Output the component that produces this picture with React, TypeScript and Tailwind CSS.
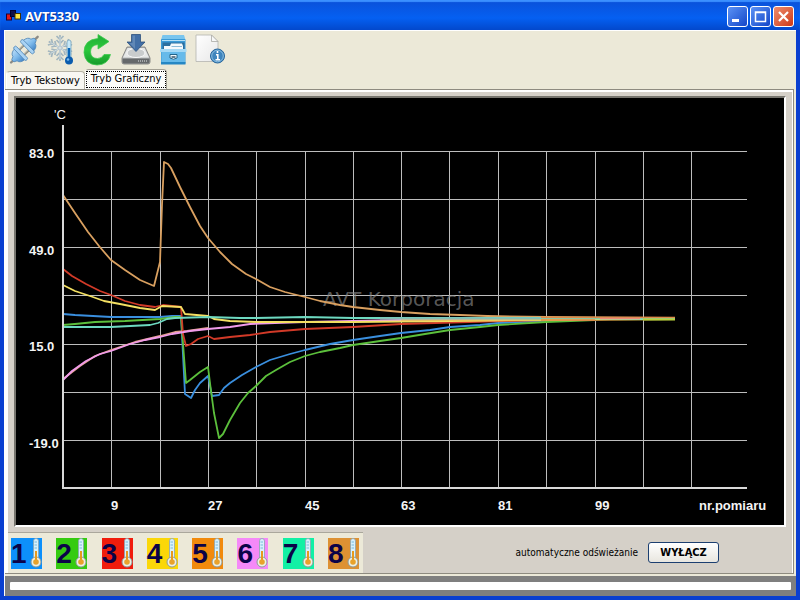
import React from "react";

const UI_FONT = "font-['DejaVu_Sans_Condensed','DejaVu_Sans',sans-serif]";

function PlugIcon() {
  return (
    <svg viewBox="0 0 32 32" className="size-8" aria-hidden="true">
      <defs>
        <linearGradient id="plug" x1="0" y1="0" x2="0" y2="1">
          <stop offset="0" stopColor="#b9dcf7" />
          <stop offset="0.5" stopColor="#7fbbec" />
          <stop offset="1" stopColor="#3f83c6" />
        </linearGradient>
      </defs>
      <g transform="rotate(-44 15 16)">
        <path d="M-3 16 H3 M29 16 H34" stroke="#8b8b86" strokeWidth="2.400" strokeLinecap="round" />
        <path d="M11 12.500 H18.500 M11 19.500 H18.500" stroke="#8a8a80" strokeWidth="2.200" />
        <path d="M11 12 H18.500 M11 19 H18.500" stroke="#d5d3c4" strokeWidth="0.800" />
        <path d="M20.500 8.500 Q27 9 27.500 13 L30.500 14.500 V17.500 L27.500 19 Q27 23 20.500 23.500 Z" fill="url(#plug)" stroke="#4f86b8" strokeWidth="0.800" />
        <rect x="18" y="7" width="3.500" height="18" rx="1.500" fill="#a9d3f4" stroke="#4f86b8" strokeWidth="0.800" />
        <path d="M9.500 8.500 Q3 9 2.500 13 L-0.500 14.500 V17.500 L2.500 19 Q3 23 9.500 23.500 Z" fill="url(#plug)" stroke="#4f86b8" strokeWidth="0.800" />
        <rect x="8.500" y="7" width="3.500" height="18" rx="1.500" fill="#a9d3f4" stroke="#4f86b8" strokeWidth="0.800" />
      </g>
    </svg>
  );
}

function FreezeIcon() {
  return (
    <svg viewBox="0 0 32 32" className="size-8" aria-hidden="true">
      <g stroke="#a3b6bf" strokeWidth="1.700" fill="none">
        {[0, 60, 120, 180, 240, 300].map((a) => (
          <g key={a} transform={`rotate(${a} 14 14)`}>
            <path d="M14 14 V1 M10.500 2 L14 5.500 L17.500 2 M10.500 6 L14 9.500 L17.500 6" />
          </g>
        ))}
      </g>
      <path d="M14 3 V25 M4.500 8.500 L23.500 19.500 M23.500 8.500 L4.500 19.500" stroke="#e3edf1" strokeWidth="0.700" />
      <rect x="21" y="6" width="4" height="19" rx="2" fill="#c6e8f8" stroke="#7aa5bd" strokeWidth="0.800" />
      <path d="M23 14 V25" stroke="#0b67b8" strokeWidth="2.500" />
      <circle cx="23" cy="26.500" r="4" fill="#0b5cae" />
      <circle cx="22" cy="25.500" r="1.300" fill="#77b9ee" />
    </svg>
  );
}

function RefreshIcon() {
  return (
    <svg viewBox="2 0 32 32" className="size-8" aria-hidden="true">
      <defs>
        <linearGradient id="refresh" x1="0" y1="0" x2="0" y2="1">
          <stop offset="0" stopColor="#1fae36" />
          <stop offset="0.5" stopColor="#2cc93c" />
          <stop offset="1" stopColor="#159a2b" />
        </linearGradient>
      </defs>
      <path
        d="M17 0.500 L28 7.500 L17 15 V10.500 Q9.500 11 9.500 18 Q10 24.500 16.500 24.500 Q21 24.500 23 20.500 L29.500 20.500 Q27 31 16 31 Q4 30.500 3 18.500 Q3 5.500 17 4.500 Z"
        fill="url(#refresh)"
        stroke="#3cc94c"
        strokeWidth="0.800"
      />
    </svg>
  );
}

function SaveDiskIcon() {
  return (
    <svg viewBox="0 0 32 32" className="size-8" aria-hidden="true">
      <path d="M7 13 H25 L30 24 V28 Q30 30 28 30 H4 Q2 30 2 28 V24 Z" fill="#b9bcbd" stroke="#777" strokeWidth="0.800" />
      <path d="M7.500 14 H24.500 L29 23.500 H3 Z" fill="#e6e8e8" />
      <ellipse cx="16" cy="19" rx="9" ry="4.500" fill="#c9cccd" stroke="#f7f7f7" />
      <path d="M2.500 24.500 H29.500 V27.500 Q29.500 29.500 28 29.500 H4 Q2.500 29.500 2.500 27.500 Z" fill="#66696b" />
      <path d="M18 27 H28" stroke="#a5a8aa" strokeDasharray="1 1" strokeWidth="2" />
      <path d="M11.500 0.500 H20.500 V8 H25 L16 17.500 L7 8 H11.500 Z" fill="#426fa6" stroke="#2d527c" strokeWidth="0.800" />
      <path d="M12.500 1.500 H15 V15 L9.500 9 H12.500 Z" fill="#6d93bd" opacity="0.700" />
    </svg>
  );
}

function CabinetIcon() {
  return (
    <svg viewBox="0 0 32 32" className="size-8" aria-hidden="true">
      <path d="M5.500 1 H27 L28.500 6 H4 Z" fill="#79c5ee" />
      <rect x="4" y="5" width="24.500" height="25" rx="1" fill="#3a9ad6" />
      <path d="M5 6.500 H28" stroke="#b5e1f7" />
      <rect x="5.500" y="8.500" width="22" height="7.500" fill="#2b6f9f" />
      <path d="M7 12 H13 L14 9.500 H25 L26 12 V16 H7 Z" fill="#f4f9fc" />
      <path d="M14.500 12.500 H25" stroke="#8cbbd8" />
      <path d="M3 15 H29.500 V18 H3 Z" fill="#a5d9f5" />
      <rect x="4.500" y="18" width="23.500" height="10" fill="#66baea" />
      <rect x="4" y="28" width="24.500" height="2.500" fill="#2687c4" />
      <path d="M13 20.500 H20 V24 Q16.500 26.500 13 24 Z" fill="#f2fbff" stroke="#236489" />
      <path d="M14.500 23 H18.500" stroke="#35546a" strokeWidth="1.500" />
    </svg>
  );
}

function InfoPageIcon() {
  return (
    <svg viewBox="0 0 32 32" className="size-8" aria-hidden="true">
      <defs>
        <linearGradient id="page" x1="0" y1="0" x2="1" y2="1">
          <stop offset="0" stopColor="#ffffff" />
          <stop offset="1" stopColor="#e8e8e8" />
        </linearGradient>
      </defs>
      <path d="M2 1 H17.500 L24 7.500 V27.500 H2 Z" fill="url(#page)" stroke="#b4b4b0" strokeWidth="0.800" />
      <path d="M17.500 1 V7.500 H24 Z" fill="#f8f8f8" stroke="#a9a9a5" strokeWidth="0.800" />
      <circle cx="23.500" cy="22" r="7" fill="#3f85bd" stroke="#27659b" strokeWidth="1" />
      <circle cx="23.500" cy="22" r="5.800" fill="none" stroke="#9dcbea" strokeWidth="0.800" />
      <path d="M23.500 17 V19 M22 20.800 H23.800 V25.500 M21.500 25.800 H26" stroke="#fff" strokeWidth="1.600" fill="none" />
    </svg>
  );
}

const tools = [
  { label: "Połącz", icon: <PlugIcon /> },
  { label: "Temperatura", icon: <FreezeIcon /> },
  { label: "Odśwież", icon: <RefreshIcon /> },
  { label: "Zapisz", icon: <SaveDiskIcon /> },
  { label: "Archiwum", icon: <CabinetIcon /> },
  { label: "Informacje", icon: <InfoPageIcon /> },
];

const columns = [111, 160, 208, 256, 305, 353, 401, 449, 498, 546, 595, 643, 691];
const rows = [151, 199, 247, 295, 344, 392, 440];

const yLabels = [
  { text: "83.0", y: 158 },
  { text: "49.0", y: 255 },
  { text: "15.0", y: 351 },
  { text: "-19.0", y: 448 },
];

const xLabels = [
  { text: "9", x: 111 },
  { text: "27", x: 208 },
  { text: "45", x: 305 },
  { text: "63", x: 401 },
  { text: "81", x: 498 },
  { text: "99", x: 595 },
  { text: "nr.pomiaru", x: 699 },
];

const series = [
  {
    color: "#3a8fdf",
    points:
      "63,314 75,315 111,317 140,317 160,317 172,316 181,316 185,394 191,398 195,390 200,383 208,376 212,396 219,395 224,388 230,383 242,375 256,367 270,360 290,354 305,350 330,344 353,340 380,336 401,333 430,330 450,327 480,325 498,323 546,321 595,319 675,318",
  },
  {
    color: "#5cc03c",
    points:
      "63,325 75,324 95,322 125,321 160,319 175,317 181,317 186,383 190,380 200,372 208,367 211,391 214,413 219,438 223,434 230,420 240,403 248,393 256,386 266,376 276,370 290,362 305,356 320,352 340,348 353,345 380,341 401,338 425,334 450,330 480,327 498,325 546,322 595,320 675,319",
  },
  {
    color: "#e2a08c",
    points: "63,379 80,366 95,356 111,350 135,342 160,336 175,332 187,331 208,328",
  },
  {
    color: "#d23a28",
    points:
      "63,269 72,276 86,284 100,291 111,295 125,301 140,305 155,307 163,305 181,307 183,334 186,346 191,344 198,339 208,336 214,339 230,337 250,335 270,332 305,329 353,327 401,324 470,322 546,320 675,319",
  },
  {
    color: "#d9a060",
    points:
      "63,195 75,213 88,232 99,246 111,260 125,270 140,280 154,286 157,274 160,262 162,205 164,162 168,164 171,168 180,187 190,207 200,226 208,238 220,252 232,264 246,274 256,279 270,287 285,292 305,297 320,301 340,305 353,307 380,310 401,312 430,314 460,315 487,316 546,317 675,318",
  },
  {
    color: "#f09bea",
    points:
      "63,380 72,371 86,361 100,354 111,351 130,344 145,340 160,337 172,334 190,331 208,329 230,327 250,324 275,323 305,322 353,321 401,320 546,319 675,319",
  },
  {
    color: "#f3df62",
    points:
      "63,285 75,291 90,296 104,301 120,304 140,308 155,310 162,306 181,307 185,314 208,316 214,319 230,321 256,322 305,322 353,322 450,321 546,320 610,319 675,319",
  },
  {
    color: "#6dd9c0",
    points: "63,327 111,327 150,325 158,323 167,319 175,318 208,317 240,318 256,318 305,317 353,318 450,318 546,318 675,319",
  },
];

function TemperatureChart() {
  return (
    <svg
      viewBox="16 98 768 427"
      className="block h-auto w-full bg-black"
      role="img"
      aria-label="Wykres temperatury"
      fontFamily="'Liberation Sans', Arial, sans-serif"
    >
      <g stroke="#bdbdbd" strokeWidth="1" shapeRendering="crispEdges">
        {columns.map((x) => (
          <line key={x} x1={x + 0.5} x2={x + 0.5} y1="151" y2="488" />
        ))}
        {rows.map((y) => (
          <line key={y} x1="63" x2="747" y1={y + 0.5} y2={y + 0.5} />
        ))}
      </g>
      <text x="323" y="306" fontSize="20" fill="#8a8a8a" fillOpacity="0.650" fontFamily="'DejaVu Sans', sans-serif">
        AVT Korporacja
      </text>
      <g fill="none" strokeWidth="1.800" strokeLinejoin="round">
        {series.map((s) => (
          <polyline key={s.color} points={s.points} stroke={s.color} />
        ))}
      </g>
      <path d="M401 320 H546" stroke="#e9c25c" strokeWidth="1.500" />
      <path d="M380 318.500 H541" stroke="#86bdb6" strokeWidth="2" />
      <path d="M541 317.500 H675 M541 320 H595" stroke="#df8a4a" strokeWidth="1.500" />
      <path d="M600 318.500 H640" stroke="#ec8a78" strokeWidth="1.500" />
      <path d="M643 319.500 H675" stroke="#b9d13c" strokeWidth="2" />
      <path d="M63 125 V488 H747" fill="none" stroke="#d8d8d8" strokeWidth="2" />
      <g fill="#f4f4f4" fontSize="13" fontWeight="bold">
        <text x="54" y="119" fontWeight="normal">
          'C
        </text>
        {yLabels.map((l) => (
          <text key={l.text} x="29" y={l.y}>
            {l.text}
          </text>
        ))}
        {xLabels.map((l) => (
          <text key={l.text} x={l.x} y="510">
            {l.text}
          </text>
        ))}
      </g>
    </svg>
  );
}

function Thermometer() {
  return (
    <svg viewBox="0 0 12 30" className="h-[30px] w-3" aria-hidden="true">
      <rect x="3.500" y="0.500" width="5" height="23" rx="2.500" fill="#d8f0fc" stroke="#8ba4b0" strokeWidth="0.800" />
      <path d="M4.500 4 H7 M4.500 7 H7 M4.500 10 H7" stroke="#5faed6" strokeWidth="0.800" />
      <circle cx="6" cy="24" r="5" fill="#eef1e4" stroke="#8f9a96" strokeWidth="1" />
      <path d="M6 13 V24" stroke="#e89a1c" strokeWidth="2" />
      <circle cx="6" cy="24" r="2.800" fill="#e9a22b" />
    </svg>
  );
}

const sensors = [
  { id: 1, bg: "bg-[#0d90fb]" },
  { id: 2, bg: "bg-[#35cb10]" },
  { id: 3, bg: "bg-[#f01c0c]" },
  { id: 4, bg: "bg-[#fbd708]" },
  { id: 5, bg: "bg-[#f18a0c]" },
  { id: 6, bg: "bg-[#f589f8]" },
  { id: 7, bg: "bg-[#12f0a5]" },
  { id: 8, bg: "bg-[#dd9133]" },
];

const captionButton =
  "flex size-[21px] items-center justify-center rounded-[3px] border border-white bg-linear-to-br";

function TitleBar() {
  return (
    <header className="flex h-[30px] items-center gap-1 bg-linear-to-b from-[#0a50d8] via-[#0560f2] via-60% to-[#0348cc] pt-[2px] pr-[6px] pl-[6px] shadow-[inset_0_2px_1px_#3b90ff]">
      <svg viewBox="0 0 15 12" className="h-3 w-[15px]" aria-hidden="true">
        <rect x="0.500" y="4" width="5" height="6" fill="#e01818" stroke="#200030" />
        <rect x="4.500" y="0.500" width="5" height="6" fill="#101048" stroke="#000030" />
        <rect x="9" y="3.500" width="5.500" height="5.500" fill="#ffe640" stroke="#403000" />
      </svg>
      <h1 className="flex-1 font-['Noto_Sans',sans-serif] text-[13px] leading-5 font-bold text-white [text-shadow:1px_1px_#0a2a80]">
        AVT5330
      </h1>
      <div className="flex gap-[2px]">
        <button aria-label="Minimalizuj" className={`${captionButton} from-[#5c92f5] to-[#1545c8]`}>
          <svg viewBox="0 0 19 19" className="size-[19px]">
            <rect x="4" y="12" width="7" height="3" fill="#fff" />
          </svg>
        </button>
        <button aria-label="Maksymalizuj" className={`${captionButton} from-[#5c92f5] to-[#1545c8]`}>
          <svg viewBox="0 0 19 19" className="size-[19px]">
            <path d="M4.500 5 H14.500 V14.500 H4.500 Z M4 5.500 H15" fill="none" stroke="#fff" strokeWidth="1.500" />
          </svg>
        </button>
        <button aria-label="Zamknij" className={`${captionButton} from-[#ee8b6c] to-[#cc3510]`}>
          <svg viewBox="0 0 19 19" className="size-[19px]">
            <path d="M5 5 L14 14 M14 5 L5 14" stroke="#fff" strokeWidth="2.200" />
          </svg>
        </button>
      </div>
    </header>
  );
}

export default function App() {
  return (
    <div className={`flex min-h-screen flex-col bg-[#0a3fd0] text-black ${UI_FONT} text-[11px]`}>
      <TitleBar />
      <main className="mx-1 mb-1 flex flex-1 flex-col border-t border-l border-white bg-[#ece9d8]">
        <nav className="flex h-[38px] items-center gap-[5px] pl-1" aria-label="Narzędzia">
          {tools.map((t) => (
            <button key={t.label} aria-label={t.label}>
              {t.icon}
            </button>
          ))}
        </nav>
        <div role="tablist" className="flex h-5 items-end pl-px">
          <button
            role="tab"
            aria-selected="false"
            className="h-[18px] rounded-t-sm border border-b-0 border-[#b5b2a5] border-l-white bg-[#f8f7f2] px-1 leading-4 whitespace-nowrap"
          >
            Tryb Tekstowy
          </button>
          <button
            role="tab"
            aria-selected="true"
            className="h-5 rounded-t-sm border border-b-0 border-[#a5a295] border-l-white bg-[#fcfcfa] leading-4 whitespace-nowrap"
          >
            <span className="block h-[17px] border border-dotted border-black px-1 leading-[14px]">Tryb Graficzny</span>
          </button>
        </div>
        <section className="mr-[2px] flex flex-1 flex-col border-t border-r border-b border-[#8e8b80] bg-[#d5d0c8]">
          <div className="flex flex-1 flex-col border-2 border-r border-b-0 border-l-[3px] border-white">
            <div className="mx-[6px] border-2 border-[#77756e] border-r-white border-b-white mt-1">
              <TemperatureChart />
            </div>
            <div className="mt-auto flex h-[44px] items-end justify-between">
              <div className="flex h-[41px] w-[355px] items-center border-t border-[#aaa79c] bg-[#ece9d8] pl-[3px]">
                <div className="flex w-[348px] justify-between">
                  {sensors.map((s) => (
                    <button
                      key={s.id}
                      aria-label={`Czujnik ${s.id}`}
                      className={`flex size-[31px] items-center justify-between ${s.bg}`}
                    >
                      <span className="font-['Liberation_Sans',Arial,sans-serif] text-[28px] leading-[31px] font-bold text-[#0b0348]">
                        {s.id}
                      </span>
                      <Thermometer />
                    </button>
                  ))}
                </div>
              </div>
              <div className="mr-[73px] flex h-[41px] items-center gap-[10px]">
                <span id="auto-refresh" className="text-[10px]">
                  automatyczne odświeżanie
                </span>
                <button
                  aria-describedby="auto-refresh"
                  className="h-[21px] w-[71px] rounded-[3px] border border-[#1c3f70] bg-linear-to-b from-white to-[#e8e6df] leading-4 font-bold"
                >
                  WYŁĄCZ
                </button>
              </div>
            </div>
          </div>
        </section>
        <footer className="mt-[2px] bg-[#7f7f7f] px-[5px] py-[6px]">
          <div className="h-2 rounded-[1px] bg-white" role="progressbar" aria-label="Postęp" aria-valuenow={0} />
        </footer>
      </main>
    </div>
  );
}
